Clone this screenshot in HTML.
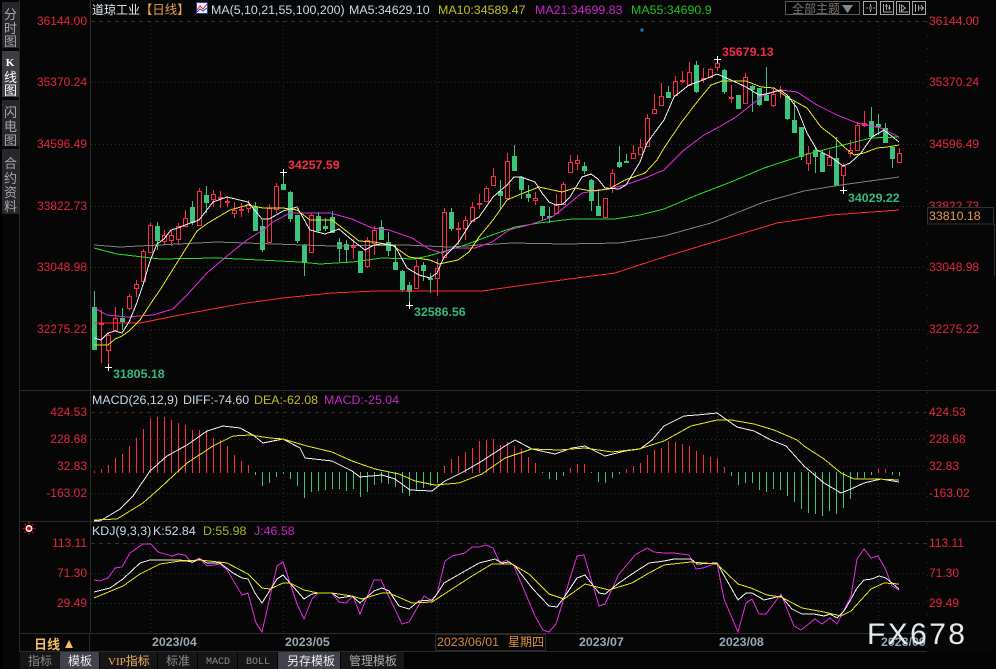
<!DOCTYPE html>
<html><head><meta charset="utf-8"><title>道琼工业</title>
<style>
html,body{margin:0;padding:0;background:#040404;width:996px;height:669px;overflow:hidden}
svg{display:block}
text{font-family:"Liberation Sans","WenQuanYi Zen Hei","Noto Sans CJK SC",sans-serif;font-size:12px}
.r{fill:#e5273f}.cj{font-family:"Liberation Sans","Noto Sans CJK SC",sans-serif}
.m{fill:none;stroke-width:1;shape-rendering:crispEdges}
.t{font-size:12.4px}
.b{font-size:12.4px;font-weight:bold}
</style></head><body>
<svg width="996" height="669" viewBox="0 0 996 669" xmlns="http://www.w3.org/2000/svg">
<rect width="996" height="669" fill="#060606"/>
<rect x="0" y="0" width="2" height="669" fill="#000"/>
<!-- sidebar -->
<rect x="2" y="2" width="17" height="46" fill="#26272b"/>
<rect x="2" y="51" width="17" height="46" fill="#3d3e44"/>
<rect x="2" y="100" width="17" height="46" fill="#26272b"/>
<rect x="2" y="149" width="17" height="65" fill="#26272b"/>
<g fill="#a8a8a8" text-anchor="middle" style="font-size:13px">
<text x="10.5" y="19" style="font-size:13px">分</text><text x="10.5" y="33" style="font-size:13px">时</text><text x="10.5" y="46" style="font-size:13px">图</text>
<text x="10" y="66" fill="#fff" style="font-size:11px;font-weight:bold;font-family:'Liberation Serif',serif">K</text><text x="10.5" y="82" fill="#fff" style="font-size:13px">线</text><text x="10.5" y="95" fill="#fff" style="font-size:13px">图</text>
<text x="10.5" y="117" style="font-size:13px">闪</text><text x="10.5" y="131" style="font-size:13px">电</text><text x="10.5" y="145" style="font-size:13px">图</text>
<text x="10.5" y="168" style="font-size:13px">合</text><text x="10.5" y="183" style="font-size:13px">约</text><text x="10.5" y="197" style="font-size:13px">资</text><text x="10.5" y="211" style="font-size:13px">料</text>
</g>
<!-- frame -->
<g stroke="#2b2b2b" shape-rendering="crispEdges" fill="none">
<path d="M19.5 0V652M90.5 0V633M19 390.5H996M19 521.5H996M19 633.5H927M19 651.5H927"/>
</g>
<g stroke="#333" stroke-width="1" stroke-dasharray="4 4" shape-rendering="crispEdges" fill="none">
<path d="M91 21.5H927M91 412.5H927M91 543.5H927"/>
</g>
<g stroke="#2c2c2c" stroke-width="1" stroke-dasharray="1 3" shape-rendering="crispEdges" fill="none">
<path d="M91 82.5H927M91 144.5H927M91 206.5H927M91 267.5H927M91 329.5H927M91 439.5H927M91 466.5H927M91 493.5H927M91 573.5H927M91 603.5H927"/>
<path d="M150.5 22V390M283.5 22V390M437.5 22V390M577.5 22V390M717.5 22V390M878.5 22V390M150.5 392V521M283.5 392V521M437.5 392V521M577.5 392V521M717.5 392V521M878.5 392V521M150.5 523V633M283.5 523V633M437.5 523V633M577.5 523V633M717.5 523V633M878.5 523V633"/>
<path d="M927.5 22V390M927.5 392V521M927.5 523V633" stroke-dasharray="1 12"/>
</g>
<!-- price labels -->
<g class="r" text-anchor="end">
<text x="87" y="25">36144.00</text><text x="87" y="86">35370.24</text><text x="87" y="148">34596.49</text><text x="87" y="210">33822.73</text><text x="87" y="271">33048.98</text><text x="87" y="333">32275.22</text>
<text x="87" y="416">424.53</text><text x="87" y="443">228.68</text><text x="87" y="470">32.83</text><text x="87" y="497">-163.02</text>
<text x="87" y="547">113.11</text><text x="87" y="577">71.30</text><text x="87" y="607">29.49</text>
</g>
<g class="r">
<text x="929" y="25">36144.00</text><text x="929" y="86">35370.24</text><text x="929" y="148">34596.49</text><text x="929" y="210">33822.73</text><text x="929" y="271">33048.98</text><text x="929" y="333">32275.22</text>
<text x="929" y="416">424.53</text><text x="929" y="443">228.68</text><text x="929" y="470">32.83</text><text x="929" y="497">-163.02</text>
<text x="929" y="547">113.11</text><text x="929" y="577">71.30</text><text x="929" y="607">29.49</text>
</g>
<rect x="927.5" y="207.5" width="66" height="16.5" fill="#060606" stroke="#333" shape-rendering="crispEdges"/>
<text x="929" y="220" fill="#e79a55" class="t">33810.18</text>
<path d="M994.5 224V276" stroke="#333" shape-rendering="crispEdges"/>
<!-- title row -->
<text x="92" y="14" fill="#e8f0f6" class="cj">道琼工业</text>
<text x="140" y="14" fill="#e6a24c" class="cj t">【日线】</text>
<g shape-rendering="crispEdges"><rect x="196.5" y="2.5" width="11" height="11" fill="#f4f4f4" stroke="#2a3ea0"/></g>
<path d="M197 10L200 6L203 9L207 4" stroke="#e02020" fill="none"/><path d="M197 12L200 9L203 11L207 8" stroke="#2040c0" fill="none"/>
<text x="211" y="14" fill="#c9dbe9" class="t">MA(5,10,21,55,100,200)</text>
<text x="349" y="14" fill="#c9dbe9" class="t">MA5:34629.10</text>
<text x="438" y="14" fill="#c4bf22" class="t">MA10:34589.47</text>
<text x="535" y="14" fill="#c626c8" class="t">MA21:34699.83</text>
<text x="631" y="14" fill="#1fc01f" class="t">MA55:34690.9</text>
<circle cx="642" cy="30" r="1.7" fill="#1578c8"/>
<!-- top right -->
<rect x="785.5" y="1.5" width="74" height="13" fill="none" stroke="#5c5c5c" shape-rendering="crispEdges"/>
<text x="792" y="13" fill="#777" class="cj">全部主题</text>
<path d="M842 5h11l-5.500 8z" fill="#7c8a96"/>
<g fill="none" stroke="#a8a8a8" shape-rendering="crispEdges">
<rect x="863.5" y="1.500" width="13" height="13"/><rect x="880.500" y="1.500" width="13" height="13"/><rect x="896.500" y="1.500" width="13" height="13"/><rect x="912.500" y="1.500" width="13" height="13"/>
<path d="M870.500 4v2M870.500 10v2M866 8h2M873 8h2M869 7h3M869 9h3"/>
<path d="M883.500 4v8h9M886.500 4v6M889.500 5v5M885 6h3M888 8h3"/>
<path d="M899.500 4v8h9M901.500 5l4 3l-4 3z"/>
<path d="M915.500 4v8M918.500 5v6M918.500 8h5M921 5.500l2.500 2.500l-2.500 2.500"/>
</g>
<!-- candles red -->
<g fill="none" stroke="#fb2b4a" shape-rendering="crispEdges">
<path d="M101.500 310V363M99.500 323.500h4v1h-4zM108.500 333V335M108.500 350V366M106.500 335.500h4v15h-4zM115.500 307V318M115.500 330V331M113.500 318.500h4v12h-4zM129.500 294V296M129.500 308V310M127.500 296.500h4v12h-4zM136.500 280V284M136.500 288V297M134.500 284.500h4v4h-4zM143.500 249V251M141.500 251.500h4v30h-4zM150.500 223V225M150.500 252V253M148.500 225.500h4v27h-4zM164.500 230V235M164.500 241V245M162.500 235.500h4v6h-4zM171.500 230V235M171.500 240V246M169.500 235.500h4v5h-4zM178.500 223V226M178.500 239V245M176.500 226.500h4v13h-4zM185.500 210V218M183.500 218.500h4v8h-4zM199.500 188V191M197.500 191.500h4v34h-4zM213.500 190V194M213.500 199V207M211.500 194.500h4v5h-4zM220.500 191V208M218.500 197.500h4v1h-4zM227.500 197V207M225.500 201.500h4v1h-4zM234.500 202V210M234.500 213V218M232.500 210.500h4v3h-4zM241.500 203V217M239.500 209.500h4v1h-4zM248.500 200V204M248.500 208V213M246.500 204.500h4v4h-4zM269.500 204V208M267.500 208.500h4v34h-4zM276.500 183V186M276.500 209V213M274.500 186.500h4v23h-4zM311.500 213V215M309.500 215.500h4v37h-4z"/>
<path d="M353.500 239V259M351.500 246.500h4v1h-4zM367.500 237V240M367.500 266V268M365.500 240.500h4v26h-4zM374.500 226V230M374.500 243V255M372.500 230.500h4v13h-4zM416.500 260V266M414.500 266.500h4v22h-4zM437.500 259V268M437.500 278V296M435.500 268.500h4v10h-4zM444.500 208V212M442.500 212.500h4v45h-4zM458.500 222V245M456.500 228.500h4v1h-4zM465.500 216V220M465.500 228V240M463.500 220.500h4v8h-4zM472.500 202V207M472.500 221V222M470.500 207.500h4v14h-4zM479.500 194V209M477.500 203.500h4v1h-4zM486.500 186V188M486.500 201V202M484.500 188.500h4v13h-4zM493.500 168V176M491.500 176.500h4v9h-4zM507.500 153V161M505.500 161.500h4v37h-4zM535.500 192V198M535.500 200V205M533.500 198.500h4v2h-4zM556.500 194V205M554.500 205.500h4v8h-4zM563.500 182V184M563.500 204V205M561.500 184.500h4v20h-4zM570.500 155V162M568.500 162.500h4v10h-4zM577.500 155V160M577.500 163V170M575.500 160.500h4v3h-4zM603.500 198.500h4v19h-4zM612.500 169V173M612.500 188V193M610.500 173.500h4v15h-4zM633.500 145V153M631.500 153.500h4v5h-4zM640.500 139V147M638.500 147.500h4v7h-4zM647.500 114V118M645.500 118.500h4v28h-4zM654.500 94V109M652.500 109.500h4v4h-4zM661.500 83V96M659.500 96.500h4v9h-4z"/>
<path d="M675.500 76V81M673.500 81.500h4v14h-4zM682.500 71V83M680.500 80.500h4v1h-4zM689.500 62V72M687.500 72.500h4v13h-4zM703.500 68V83M701.500 78.500h4v1h-4zM710.500 68V69M708.500 69.500h4v8h-4zM717.500 59V63M717.500 67V71M715.500 63.500h4v4h-4zM731.500 85V103M729.500 97.500h4v1h-4zM745.500 73V77M743.500 77.500h4v26h-4zM773.500 87V94M773.500 105V107M771.500 94.500h4v11h-4zM780.500 86V98M778.500 90.500h4v1h-4zM808.500 146V153M808.500 163V171M806.500 153.500h4v10h-4zM829.500 150V157M829.500 165V166M827.500 157.500h4v8h-4zM843.500 163V166M843.500 175V190M841.500 166.500h4v9h-4zM850.500 140V150M850.500 153V157M848.500 150.500h4v3h-4zM857.500 122V125M855.500 125.500h4v25h-4zM864.500 111V123M864.500 125V127M862.500 123.500h4v2h-4zM899.500 148V153M899.500 162V163M897.500 153.500h4v9h-4z"/>
</g>
<!-- candles green -->
<g fill="#3cc47c" stroke="#3cc47c" shape-rendering="crispEdges">
<path d="M94.500 291V350M92.500 307.500h4v42h-4zM122.500 308V330M120.500 318.500h4v3h-4zM157.500 222V250M155.500 226.500h4v14h-4zM192.500 201V225M190.500 207.500h4v15h-4zM206.500 186V213M204.500 195.500h4v7h-4zM255.500 202V230M253.500 207.500h4v23h-4zM262.500 220V252M260.500 226.500h4v23h-4zM283.500 173V189M281.500 184.500h4v5h-4zM290.500 191V222M288.500 192.500h4v26h-4zM297.500 215V243M295.500 215.500h4v25h-4zM304.500 244V276M302.500 245.500h4v17h-4zM318.500 212V233M316.500 216.500h4v14h-4zM325.500 218V231M323.500 226.500h4v2h-4zM332.500 211V232M330.500 217.500h4v15h-4zM339.500 238V262M337.500 242.500h4v6h-4zM346.500 240V262M344.500 244.500h4v5h-4zM360.500 251V272M358.500 251.500h4v21h-4zM381.500 220V240M379.500 227.500h4v12h-4zM388.500 232V256M386.500 242.500h4v8h-4zM395.500 245V269M393.500 262.500h4v7h-4zM402.500 270V292M400.500 271.500h4v18h-4zM409.500 282V305M407.500 285.500h4v6h-4zM423.500 262V281M421.500 265.500h4v5h-4zM430.500 273V293M428.500 278.500h4v1h-4zM451.500 208V231M449.500 212.500h4v16h-4zM500.500 180V210M498.500 191.500h4v4h-4zM514.500 145V170M512.500 156.500h4v14h-4zM521.500 176V199M519.500 177.500h4v12h-4zM528.500 185V202M526.500 194.500h4v3h-4zM542.500 206V220M540.500 206.500h4v9h-4zM549.500 207V223M547.500 216.500h4v1h-4zM584.500 162V174M582.500 166.500h4v4h-4zM591.500 179V211M589.500 180.500h4v20h-4zM598.500 189V215M596.500 206.500h4v9h-4zM619.500 146V168M617.500 162.500h4v4h-4zM626.500 154V163M624.500 161.500h4v1h-4z"/>
<path d="M668.500 86V98M666.500 92.500h4v5h-4zM696.500 61V93M694.500 65.500h4v26h-4zM724.500 69V94M722.500 70.500h4v21h-4zM738.500 95V109M736.500 95.500h4v13h-4zM752.500 85V112M750.500 86.500h4v3h-4zM759.500 88V106M757.500 88.500h4v16h-4zM766.500 67V100M764.500 95.500h4v5h-4zM787.500 96V120M785.500 96.500h4v22h-4zM794.500 102V132M792.500 120.500h4v12h-4zM801.500 127V160M799.500 127.500h4v29h-4zM815.500 148V173M813.500 150.500h4v6h-4zM822.500 150V172M820.500 153.500h4v18h-4zM836.500 137V185M834.500 158.500h4v27h-4zM871.500 107V136M869.500 121.500h4v15h-4zM878.500 114V135M876.500 124.500h4v2h-4zM885.500 123V142M883.500 128.500h4v14h-4zM892.500 147V168M890.500 147.500h4v11h-4z"/>
</g>
<!-- MAs -->
<polyline class="m" stroke="#ff2a2a" points="94,323 140,323 180,315 240,304 283,298 332,293 375,291 432,291 482,291 532,284 592,276 615,273 664,257 704,245 777,223 831,215 899,210"/>
<polyline class="m" stroke="#808080" points="94,245 120,247 217,242 332,246 405,245 449,247 512,243 565,244 619,243 664,236 711,223 764,202 804,191 841,185 899,177"/>
<polyline class="m" stroke="#22e022" points="94,248 117,254 160,259 217,258 260,260 300,262 320,264 352,262 382,258 415,259 432,255 465,245 492,235 515,227 539,223 572,219 615,219 640,215 664,209 697,195 731,182 764,168 804,155 831,148 851,143 871,138 899,137"/>
<polyline class="m" stroke="#e428e4" points="94,308 107,315 127,317 153,315 173,309 187,295 207,273 227,256 247,240 263,230 273,222 290,213 330,213 352,219 372,228 389,230 412,238 429,249 442,253 455,248 475,248 492,242 509,230 532,224 552,217 565,207 582,193 609,189 625,185 645,178 664,170 684,150 704,135 719,127 736,117 751,105 764,95 781,90 797,92 817,105 837,115 857,123 881,128 899,137"/>
<polyline class="m" stroke="#e8e814" points="94,345 108,345 115,339 122,336 129,331 140,320 153,300 160,290 180,258 197,231 208,223 230,210 248,205 263,208 283,208 297,210 310,220 332,220 345,230 359,241 374,242 392,245 409,257 430,260 439,264 458,260 469,252 479,237 493,220 507,200 521,194 539,187 562,192 575,188 591,191 609,189 625,180 645,173 657,160 664,148 681,123 697,102 711,85 722,81 746,81 761,87 774,88 787,97 807,108 821,127 834,137 844,147 854,155 864,153 877,148 887,147 899,145"/>
<polyline class="m" stroke="#f4f4f4" points="94.500,338 101,340 108,333 115,331 122,333 129,322 136,305 143,285 150,261 157,244 164,239 171,230 178,228 185,225 199,220 213,202 227,197 248,202 262,219 269,219 283,211 297,207 310,230 325,234 339,229 352,240 365,250 374,245 382,244 395,246 407,268 419,275 430,278 437,273 444,257 458,243 472,221 479,217 493,197 507,185 514,177 521,177 535,182 542,193 549,202 556,205 563,204 570,197 582,177 591,174 598,179 605,188 619,189 626,185 640,162 647,143 664,120 674,97 689,85 703,80 717,74 731,80 746,87 759,95 766,94 780,90 787,95 797,108 807,133 817,150 831,157 843,166 850,163 861,153 872,137 884,130 899,142"/>
<!-- crosses -->
<path d="M280 172.500h7M283.500 169v7M105 367.500h7M108.500 364v7M406 305.500h7M409.500 302v7M714 59.500h7M717.500 56v7M840 190.500h7M843.500 187v7" stroke="#fff" shape-rendering="crispEdges"/>
<text x="288" y="169" fill="#f32c47" class="b">34257.59</text>
<text x="722" y="56" fill="#f32c47" class="b">35679.13</text>
<text x="113" y="378" fill="#35b87a" class="b">31805.18</text>
<text x="414" y="316" fill="#35b87a" class="b">32586.56</text>
<text x="848" y="202" fill="#35b87a" class="b">34029.22</text>
<!-- MACD -->
<text x="92" y="404" fill="#c9dbe9" class="t">MACD(26,12,9)</text>
<text x="183" y="404" fill="#c9dbe9" class="t">DIFF:-74.60</text>
<text x="254" y="404" fill="#c4bf22" class="t">DEA:-62.08</text>
<text x="324" y="404" fill="#c626c8" class="t">MACD:-25.04</text>
<path shape-rendering="crispEdges" stroke="#fb2b4a" fill="none" d="M94.500 471V473M101.500 469V473M108.500 465V473M115.500 458V473M122.500 454V473M129.500 446V473M136.500 438V473M143.500 429V473M150.500 418V473M157.500 417V473M164.500 417V473M171.500 420V473M178.500 423V473M185.500 425V473M192.500 430V473M199.500 430V473M206.500 432V473M213.500 438V473M220.500 440V473M227.500 446V473M234.500 455V473M241.500 461V473M248.500 465V473M444.500 466V473M451.500 459V473M458.500 456V473M465.500 452V473M472.500 448V473M479.500 441V473M486.500 440V473M493.500 439V473M500.500 445V473M507.500 442V473M514.500 446V473M521.500 449V473M528.500 457V473M535.500 463V473M570.500 468V473M577.500 464V473M584.500 464V473M626.500 469V473M633.500 466V473M640.500 463V473M647.500 455V473M654.500 450V473M661.500 448V473M668.500 441V473M675.500 442V473M682.500 444V473M689.500 446V473M696.500 451V473M703.500 455V473M710.500 457V473M717.500 458V473M724.500 467V473M878.500 469V473M885.500 469V473"/>
<path shape-rendering="crispEdges" stroke="#3cc47c" fill="none" d="M255.500 472V475M262.500 472V486M269.500 472V483M276.500 472V477M283.500 472V474M290.500 472V479M297.500 472V486M304.500 472V498M311.500 472V492M318.500 472V491M325.500 472V490M332.500 472V489M339.500 472V489M346.500 472V491M353.500 472V489M360.500 472V497M367.500 472V492M374.500 472V485M381.500 472V483M388.500 472V484M395.500 472V487M402.500 472V493M409.500 472V496M416.500 472V491M423.500 472V488M430.500 472V486M437.500 472V483M542.500 472V473M549.500 472V479M556.500 472V480M563.500 472V476M591.500 472V473M598.500 472V482M605.500 472V483M612.500 472V478M619.500 472V474M731.500 472V476M738.500 472V485M745.500 472V483M752.500 472V483M759.500 472V490M766.500 472V492M773.500 472V489M780.500 472V490M787.500 472V496M794.500 472V502M801.500 472V509M808.500 472V513M815.500 472V514M822.500 472V516M829.500 472V511M836.500 472V514M843.500 472V508M850.500 472V499M857.500 472V479M864.500 472V478M871.500 472V475M892.500 472V475M899.500 472V476"/>
<polyline class="m" stroke="#f4f4f4" points="94,521 100,521 120,509 133,496 150,471 167,456 187,445 207,431 223,426 240,428 253,435 263,443 283,439 300,448 305,458 332,461 352,471 360,477 382,475 395,479 410,490 432,491 445,481 465,471 482,461 505,446 515,440 532,449 555,454 572,448 585,446 605,456 625,451 640,449 652,440 664,426 684,416 697,415 717,413 737,427 754,431 771,440 786,446 804,466 824,483 841,493 851,489 864,483 881,479 899,482"/>
<polyline class="m" stroke="#e8e814" points="94,520 117,519 143,503 160,488 187,463 213,446 233,436 250,435 270,438 283,439 307,446 332,452 352,461 375,469 399,474 415,481 435,485 459,483 482,474 505,458 532,449 559,450 585,448 612,452 639,449 664,441 691,426 717,420 731,420 754,424 774,430 797,440 804,446 824,459 841,473 854,479 877,479 899,480"/>
<!-- KDJ -->
<text x="92" y="535" fill="#c9dbe9" class="t">KDJ(9,3,3)</text>
<text x="153" y="535" fill="#c9dbe9" class="t">K:52.84</text>
<text x="203" y="535" fill="#a8b81e" class="t">D:55.98</text>
<text x="254" y="535" fill="#c626c8" class="t">J:46.58</text>
<g><circle cx="29" cy="528.500" r="3.500" fill="#fff"/><circle cx="29" cy="528.500" r="2" fill="#f00"/>
<path d="M29 522v2M29 533v2M22.500 528.500h2M33.500 528.500h2M24.500 524l1.500 1.500M32 531.500l1.500 1.500M33.500 524l-1.500 1.500M26 531.500l-1.500 1.500" stroke="#f00"/></g>
<polyline class="m" stroke="#e428e4" points="94,580 100,581 108,578 115,568 122,567 130,553 143,544 151,544 158,552 172,556 178,554 185,555 192,563 199,558 207,566 220,564 227,570 242,595 248,593 256,623 262,632 277,566 283,562 297,604 304,619 312,599 318,593 332,593 339,602 346,603 353,596 360,614 374,580 381,580 402,624 409,622 424,596 432,601 437,594 445,561 452,556 465,553 472,547 479,547 486,545 493,548 500,563 507,560 514,566 535,616 543,630 549,632 556,624 577,556 584,555 599,606 605,604 619,574 626,566 635,555 647,548 654,552 664,553 674,553 689,555 696,569 703,568 717,563 724,599 738,632 746,603 752,599 759,614 766,614 781,594 794,626 801,630 815,619 822,624 830,618 837,624 851,596 857,559 864,549 871,558 878,556 885,568 892,586 899,590"/>
<polyline class="m" stroke="#f4f4f4" points="94,592 110,588 123,579 140,563 150,560 180,560 193,562 200,559 207,563 220,563 233,573 242,578 248,579 255,593 262,603 277,579 283,575 290,583 304,599 312,594 318,593 332,593 339,598 352,596 360,603 374,591 382,588 389,591 399,606 409,609 419,601 432,600 437,594 444,583 465,571 479,563 495,559 502,563 509,562 515,566 532,588 549,606 557,607 565,596 577,578 585,575 599,593 605,594 619,583 632,574 649,563 664,561 674,559 691,559 697,564 717,563 738,600 746,593 752,593 764,600 781,596 792,609 802,614 814,614 824,616 830,614 837,618 844,611 851,599 857,588 864,580 872,579 879,576 886,578 899,589"/>
<polyline class="m" stroke="#e8e814" points="94,598 123,586 140,574 160,564 180,561 200,560 227,563 248,574 262,588 270,589 283,583 290,583 304,590 318,593 332,593 352,596 362,599 382,593 389,593 412,603 432,602 449,591 472,576 492,564 512,564 529,574 549,594 564,599 585,584 609,590 632,583 649,573 664,565 691,562 717,564 738,584 751,588 767,595 781,597 802,608 824,612 841,616 851,611 871,589 884,583 899,584"/>
<!-- date axis -->
<rect x="20" y="634" width="70" height="17" fill="#060606"/>
<text x="34" y="649" fill="#f3bd63" class="cj" style="font-size:13px;font-weight:bold">日线</text>
<path d="M65 648h8l-4-8z" fill="#f3bd63"/>
<path d="M89.500 634V651" stroke="#2b2b2b" shape-rendering="crispEdges"/>
<text x="152" y="646" fill="#9aa7b0" class="b">2023/04</text>
<text x="285" y="646" fill="#9aa7b0" class="b">2023/05</text>
<text x="579" y="646" fill="#9aa7b0" class="b">2023/07</text>
<text x="719" y="646" fill="#9aa7b0" class="b">2023/08</text>
<text x="881" y="646" fill="#9aa7b0" class="b">2023/09</text>
<rect x="435.500" y="634.500" width="110" height="16" fill="#060606" stroke="#2b2b2b" shape-rendering="crispEdges"/>
<text x="437" y="646" fill="#d88a3e" class="t">2023/06/01</text>
<text x="508" y="646" fill="#e0913e" class="cj">星期四</text>
<!-- tabs -->
<rect x="20" y="652" width="976" height="17" fill="#040404"/>
<rect x="20" y="652" width="40" height="17" fill="#161618"/>
<rect x="60" y="652" width="39" height="17" fill="#41424c"/>
<rect x="100" y="652" width="57" height="17" fill="#161618"/>
<rect x="158" y="652" width="39" height="17" fill="#161618"/>
<rect x="198" y="652" width="39" height="17" fill="#161618"/>
<rect x="238" y="652" width="39" height="17" fill="#161618"/>
<rect x="278" y="652" width="62" height="17" fill="#41424c"/>
<rect x="341" y="652" width="63" height="17" fill="#161618"/>
<text x="28" y="665" fill="#8c8c8c" class="cj">指标</text>
<text x="68" y="665" fill="#eee" class="cj">模板</text>
<text x="108" y="665" fill="#efb25a" style="font-family:'Liberation Serif','Noto Sans CJK SC',serif;font-size:11px">VIP<tspan style="font-family:'Noto Sans CJK SC',sans-serif;font-size:12px">指标</tspan></text>
<text x="166" y="665" fill="#8c8c8c" class="cj">标准</text>
<text x="206" y="664" fill="#8c8c8c" style="font-family:'Liberation Mono',monospace;font-size:10px">MACD</text>
<text x="246" y="664" fill="#8c8c8c" style="font-family:'Liberation Mono',monospace;font-size:10px">BOLL</text>
<text x="287" y="665" fill="#eee" class="cj">另存模板</text>
<text x="349" y="665" fill="#aaa" class="cj">管理模板</text>
<!-- watermark -->
<text x="867" y="644" fill="#e4eaee" style="font-family:'Liberation Sans',sans-serif;font-size:30px;letter-spacing:2.4px">FX678</text>
</svg>
</body></html>
